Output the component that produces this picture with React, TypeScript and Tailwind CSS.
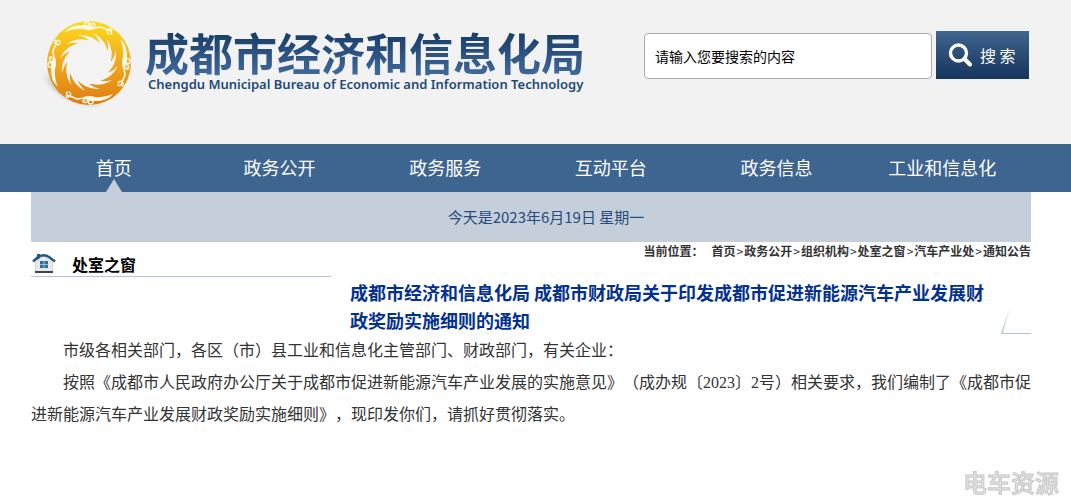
import React from "react";

const navItems = ["首页", "政务公开", "政务服务", "互动平台", "政务信息", "工业和信息化"];

const crumbs = ["首页", "政务公开", "组织机构", "处室之窗", "汽车产业处", "通知公告"];

const rays = Array.from({ length: 12 }, (_, i) => i * 30);

const SunBirdLogo = () => (
  <svg viewBox="-47 -44 94 90" className="h-[90px] w-[94px] shrink-0" aria-hidden="true">
    <defs>
      <linearGradient id="gold" x1="0" y1="0" x2="0" y2="1">
        <stop offset="0" stopColor="#fbdc1e" />
        <stop offset="0.5" stopColor="#f1a91c" />
        <stop offset="1" stopColor="#dd7c12" />
      </linearGradient>
      <radialGradient id="shade">
        <stop offset="0" stopColor="#6b6257" stopOpacity="0.9" />
        <stop offset="0.6" stopColor="#8d8780" stopOpacity="0.4" />
        <stop offset="1" stopColor="#f2f2f2" stopOpacity="0" />
      </radialGradient>
      <clipPath id="flatTop">
        <rect x="-47" y="-42" width="94" height="88" />
      </clipPath>
    </defs>
    <ellipse cx="-16" cy="27" rx="37" ry="14" transform="rotate(26 -16 27)" fill="url(#shade)" />
    <g clipPath="url(#flatTop)">
      <circle r="42" fill="url(#gold)" />
      <g fill="#f3f3f3">
        <circle cy="-1" r="22" />
        {rays.map((deg) => (
          <path key={deg} transform={`translate(0 -1) rotate(${deg})`} d="M-11 -27 Q4 -28 13 -16 L2 -20 Q-3 -25 -11 -27Z" />
        ))}
      </g>
      {[0, 90, 180, 270].map((deg) => (
        <g key={deg} transform={`rotate(${deg})`} fill="none" stroke="#fdf8e8" strokeLinecap="round" strokeLinejoin="round">
          <path d="M-24 -31 Q-18 -39 -3 -38 Q2 -38 6 -34 Q-1 -32 -6 -34 Q-15 -35 -24 -31Z" fill="#fdf8e8" stroke="none" />
          <path d="M-3 -36 Q-6 -41 -1 -41 Q2 -40 0 -38" strokeWidth="1.5" />
          <path d="M0 -36 Q3 -41 6 -39 Q7 -37 4 -37" strokeWidth="1.4" />
          <path d="M4 -35 L12 -36 L19 -33" strokeWidth="1.6" />
          <path d="M19 -33 Q22 -36 23 -33 M19 -33 Q24 -32 22 -29 M19 -33 Q17 -31 20 -29" strokeWidth="1.4" />
        </g>
      ))}
    </g>
  </svg>
);

const HouseIcon = () => (
  <svg viewBox="0 0 24 21" className="h-[21px] w-6 shrink-0" aria-hidden="true">
    <path d="M3.5 9 L12 3 L20.5 9 V18.5 H3.5Z" fill="#e9e9e9" stroke="#c0c0c0" strokeWidth="0.6" />
    <path d="M3 18 H21 V20 H3Z" fill="#40464c" />
    <path d="M5 1 H8 V5 L5 7Z" fill="#245b7c" />
    <path d="M1 8.5 L6 4 Q12 0.5 17 4 L23 8.5" fill="none" stroke="#235a7b" strokeWidth="2.4" />
    <path d="M8 8 H16 V15 H8Z" fill="#2e6d96" />
    <path d="M12 8 V15 M8 11.5 H16" stroke="#b4d2e4" strokeWidth="0.8" />
  </svg>
);

const Header = () => (
  <header className="flex h-36 items-start justify-between bg-[#f2f2f2] pr-[42px] pl-[42px]">
    <a href="#" className="flex pt-[19px]">
      <SunBirdLogo />
      <div className="pt-2 pl-[9px]">
        <h1 className="bg-gradient-to-b from-[#123860] to-[#426b9f] bg-clip-text text-[44px] leading-[50px] font-bold whitespace-nowrap text-transparent">
          成都市经济和信息化局
        </h1>
        <p className="pl-[3px] font-['Noto_Sans','Open_Sans',sans-serif] text-[13px] leading-[14px] font-semibold whitespace-nowrap text-[#224a76]">
          Chengdu Municipal Bureau of Economic and Information Technology
        </p>
      </div>
    </a>
    <form className="flex items-end gap-1 pt-[31px]">
      <input
        type="text"
        aria-label="搜索内容"
        defaultValue="请输入您要搜索的内容"
        className="h-[46px] w-72 rounded border border-[#adadad] bg-white px-[10px] text-[14px] text-black"
      />
      <button
        type="button"
        className="flex h-12 w-[93px] items-center gap-2 bg-gradient-to-b from-[#40658f] to-[#15355d] pl-3 text-[16px] whitespace-nowrap text-white"
      >
        <svg viewBox="0 0 24 24" className="size-6" fill="none" stroke="white" aria-hidden="true">
          <circle cx="10.5" cy="10" r="8" strokeWidth="3.4" />
          <path d="M16.5 16 L22 21.5" strokeWidth="4" strokeLinecap="round" />
        </svg>
        搜 索
      </button>
    </form>
  </header>
);

const App = () => {
  return (
    <div className="min-h-screen bg-white font-['Noto_Sans_CJK_SC',sans-serif]">
      <Header />

      <nav className="bg-[#3e6590] pr-[46px] pl-[31px]">
        <ul className="grid grid-cols-6">
          {navItems.map((item, index) => (
            <li key={item} className="relative">
              <a href="#" className="block pb-0.5 text-center text-[18px] leading-[46px] text-white">
                {item}
              </a>
              {index === 0 && (
                <svg viewBox="0 0 16 13" className="absolute bottom-0 left-1/2 h-[13px] w-4 -translate-x-1/2">
                  <path d="M8 0 L16 13 H0Z" fill="#c4cfdb" />
                </svg>
              )}
            </li>
          ))}
        </ul>
      </nav>

      <main className="pr-10 pl-[31px]">
        <p className="bg-[#c4cfdb] pl-[30px] text-center text-[15px] leading-[50px] text-[#274b7a]">
          今天是2023年6月19日 星期一
        </p>

        <div className="flex items-start">
          <div className="flex h-[35px] w-[300px] shrink-0 items-end gap-4 border-b border-[#b4c4de] pb-0.5 pl-px">
            <HouseIcon />
            <h2 className="text-[16px] leading-5 font-bold text-black">处室之窗</h2>
          </div>

          <div className="flex-1">
            <p className="text-right text-[12px] leading-[18px] font-bold text-[#333]">
              <span className="pr-2">当前位置：</span>
              {crumbs.map((crumb, index) => (
                <React.Fragment key={crumb}>
                  {index > 0 && <span className="px-px font-normal">&gt;</span>}
                  <a href="#">{crumb}</a>
                </React.Fragment>
              ))}
            </p>
            <div className="flex items-end justify-between pt-[18px] pl-[19px]">
              <h3 className="max-w-[646px] text-[18px] leading-7 font-bold text-[#03318f]">
                成都市经济和信息化局 成都市财政局关于印发成都市促进新能源汽车产业发展财政奖励实施细则的通知
              </h3>
              <svg viewBox="0 0 30 26" className="h-[26px] w-[30px] shrink-0" fill="none" aria-hidden="true">
                <defs>
                  <linearGradient id="fold" x1="0" y1="0" x2="0" y2="1">
                    <stop offset="0" stopColor="#b4bfdc" stopOpacity="0" />
                    <stop offset="1" stopColor="#b4bfdc" />
                  </linearGradient>
                </defs>
                <path d="M9 0 L1 25" stroke="url(#fold)" strokeWidth="1.4" />
                <path d="M0 25.5 H30" stroke="#b4bfdc" />
              </svg>
            </div>
          </div>
        </div>

        <article className="pt-px text-justify indent-8 font-['Liberation_Serif','Noto_Sans_CJK_SC',sans-serif] text-[16px] leading-8 text-[#333] [text-spacing-trim:space-all]">
          <p>市级各相关部门，各区（市）县工业和信息化主管部门、财政部门，有关企业：</p>
          <p>
            按照《成都市人民政府办公厅关于成都市促进新能源汽车产业发展的实施意见》（成办规〔2023〕2号）相关要求，我们编制了《成都市促进新能源汽车产业发展财政奖励实施细则》，现印发你们，请抓好贯彻落实。
          </p>
        </article>
      </main>

      <div className="fixed right-3 bottom-0 text-[24px] leading-8 font-medium text-[#e2e2e2] [-webkit-text-stroke:1px_#c8c8c8]">
        电车资源
      </div>
    </div>
  );
};

export default App;
